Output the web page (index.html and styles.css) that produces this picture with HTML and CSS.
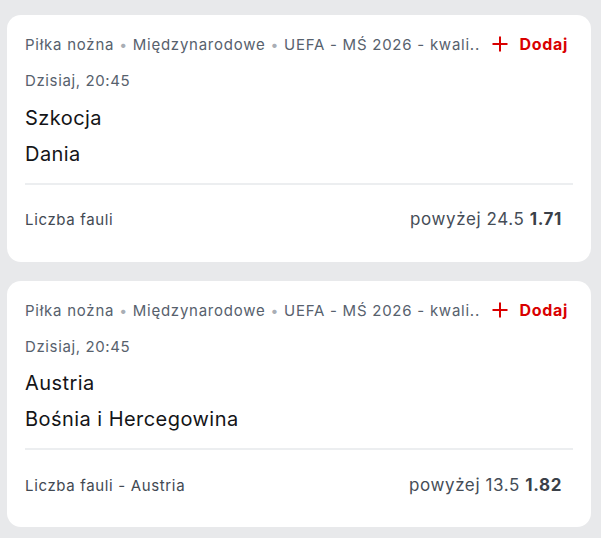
FILE: index.html
```html
<!DOCTYPE html>
<html lang="pl">
<head>
<meta charset="utf-8">
<link rel="stylesheet" href="styles.css">
</head>
<body>
<div class="list">
  <div class="card">
    <div class="top">
      <div class="crumbs">Piłka nożna <span class="dot">•</span> Międzynarodowe <span class="dot">•</span> UEFA - MŚ 2026 - kwali..</div>
      <div class="add"><svg class="plus" viewBox="0 0 16 16" width="16" height="16"><path d="M8 0.5V15.5M0.5 8H15.5" stroke="currentColor" stroke-width="2"/></svg><span>Dodaj</span></div>
    </div>
    <div class="date">Dzisiaj, 20:45</div>
    <div class="team">Szkocja</div>
    <div class="team">Dania</div>
    <div class="divider"></div>
    <div class="market">
      <div class="mname">Liczba fauli</div>
      <div class="pick">powyżej 24.5 <b>1.71</b></div>
    </div>
  </div>
  <div class="card card-short">
    <div class="top">
      <div class="crumbs">Piłka nożna <span class="dot">•</span> Międzynarodowe <span class="dot">•</span> UEFA - MŚ 2026 - kwali..</div>
      <div class="add"><svg class="plus" viewBox="0 0 16 16" width="16" height="16"><path d="M8 0.5V15.5M0.5 8H15.5" stroke="currentColor" stroke-width="2"/></svg><span>Dodaj</span></div>
    </div>
    <div class="date">Dzisiaj, 20:45</div>
    <div class="team">Austria</div>
    <div class="team">Bośnia i Hercegowina</div>
    <div class="divider"></div>
    <div class="market">
      <div class="mname">Liczba fauli - Austria</div>
      <div class="pick">powyżej 13.5 <b>1.82</b></div>
    </div>
  </div>
</div>
</body>
</html>
```
FILE: styles.css
```css
html, body {
  margin: 0;
  padding: 0;
  background: #e8e9eb;
  font-family: Inter, "Noto Sans", sans-serif;
}
.list {
  display: flex;
  flex-direction: column;
  gap: 19px;
  padding: 15px 10px 0 7px;
}
.card {
  background: #ffffff;
  border-radius: 14px;
  padding: 18px 18px 0 18px;
  height: 247px;
  box-sizing: border-box;
}
.card-short { height: 246px; padding-top: 18px; }
.top {
  display: flex;
  align-items: center;
  justify-content: space-between;
  height: 22px;
}
.crumbs {
  font-size: 15px;
  letter-spacing: 0.75px;
  color: #57616d;
  white-space: nowrap;
}
.dot {
  color: #a9aeb5;
  font-size: 14px;
}
.add {
  display: flex;
  align-items: center;
  gap: 11px;
  color: #d90000;
  font-weight: 700;
  font-size: 16px;
  letter-spacing: 0.7px;
  margin-right: 5px;
}
.plus { display: block; }
.date {
  margin-top: 15px;
  font-size: 15px;
  letter-spacing: 0.62px;
  color: #57616d;
  line-height: 22px;
}
.team {
  font-size: 20px;
  letter-spacing: 0.45px;
  color: #141518;
  line-height: 24px;
  margin-top: 14px;
}
.card-short .team { margin-top: 13px; }
.team + .team, .card-short .team + .team { margin-top: 12px; }
.divider {
  height: 2px;
  background: #eceef0;
  margin-top: 17px;
}
.market {
  display: flex;
  justify-content: space-between;
  align-items: center;
  height: 24px;
  margin-top: 22px;
  padding-right: 11px;
}
.card-short .market { margin-top: 23px; }
.mname {
  font-size: 15px;
  letter-spacing: 0.65px;
  color: #424952;
}
.pick {
  font-size: 17px;
  letter-spacing: 0.6px;
  color: #454d57;
}
.pick b {
  font-weight: 700;
  color: #3a4048;
}
```
